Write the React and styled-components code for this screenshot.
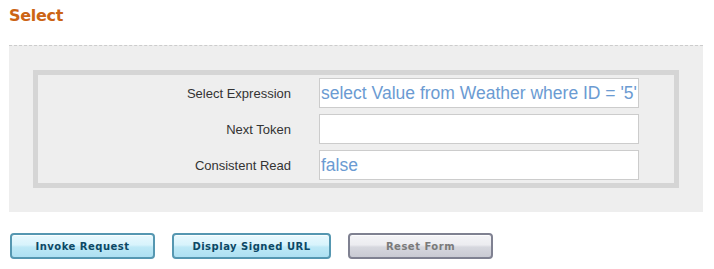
import React from 'react'
import styled, { createGlobalStyle } from 'styled-components'

const GlobalStyle = createGlobalStyle`
  body {
    margin: 0;
    background: #ffffff;
    font-family: 'Liberation Sans', Arial, sans-serif;
  }
`

const Page = styled.div`
  width: 714px;
  height: 269px;
  overflow: hidden;
`

const Title = styled.h1`
  margin: 0;
  padding: 5px 9px 0;
  height: 45px;
  box-sizing: border-box;
  font-family: 'DejaVu Sans', Tahoma, sans-serif;
  font-size: 16px;
  line-height: 22px;
  font-weight: bold;
  letter-spacing: -0.3px;
  color: #cc6414;
`

const Panel = styled.div`
  margin-left: 9px;
  width: 694px;
  box-sizing: border-box;
  border-top: 1px dashed #cccccc;
  background: #eeeeee;
  padding: 24px;
`

const FormBox = styled.div`
  border: 5px solid #d5d5d5;
  padding: 3px 0;
  display: flex;
  flex-direction: column;
  gap: 6px;
`

const Row = styled.div`
  display: grid;
  grid-template-columns: 253px 320px;
  column-gap: 28px;
  align-items: center;
`

const Label = styled.label`
  text-align: right;
  font-size: 13px;
  color: #333333;
`

const Field = styled.div`
  height: 30px;
  box-sizing: border-box;
  border: 1px solid #cccccc;
  background: #ffffff;
  padding: 0 1px;
  font-size: 17.5px;
  line-height: 28px;
  color: #6b9bd2;
  white-space: nowrap;
  overflow: hidden;
`

const Buttons = styled.div`
  display: flex;
  gap: 17px;
  padding: 21px 10px 0;
`

const Button = styled.button`
  height: 26px;
  width: ${(p) => p.width}px;
  box-sizing: border-box;
  border-radius: 4px;
  border: 2px solid ${(p) => (p.muted ? '#7f8191' : '#5597b1')};
  background: ${(p) =>
    p.muted
      ? 'linear-gradient(#f4f4f7 0%, #ececf0 45%, #d6d7de 55%, #c9cad3 100%)'
      : 'linear-gradient(#e8f9fe 0%, #d8f3fc 45%, #bde8f6 55%, #aee0f2 100%)'};
  box-shadow: inset 0 1px 0 rgba(255, 255, 255, 0.8);
  font-family: 'DejaVu Sans', Verdana, sans-serif;
  font-weight: bold;
  font-size: 10px;
  letter-spacing: 0.5px;
  color: ${(p) => (p.muted ? '#7a7a7a' : '#0c4865')};
  padding: 1px 0 0;
  cursor: pointer;
`

const fields = [
  { label: 'Select Expression', value: "select Value from Weather where ID = '5'" },
  { label: 'Next Token', value: '' },
  { label: 'Consistent Read', value: 'false' },
]

const App = () => {
  return (
    <Page>
      <GlobalStyle />
      <Title>Select</Title>
      <Panel>
        <FormBox>
          {fields.map((f) => (
            <Row key={f.label}>
              <Label>{f.label}</Label>
              <Field>{f.value}</Field>
            </Row>
          ))}
        </FormBox>
      </Panel>
      <Buttons>
        <Button width={145}>Invoke Request</Button>
        <Button width={159}>Display Signed URL</Button>
        <Button width={145} muted>
          Reset Form
        </Button>
      </Buttons>
    </Page>
  )
}

export default App
